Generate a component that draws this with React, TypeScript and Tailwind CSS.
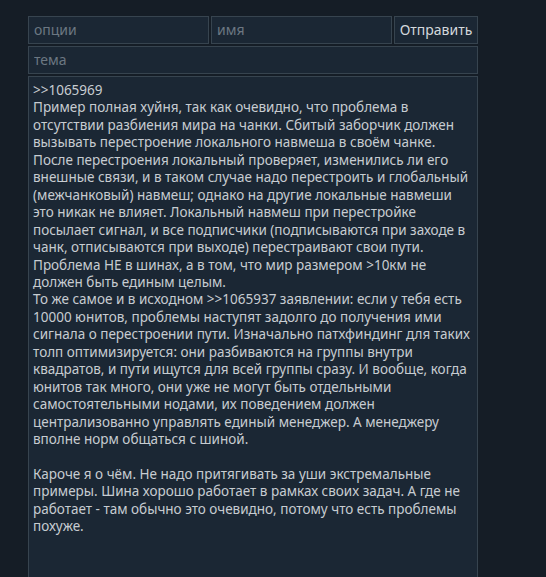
import React from 'react';

const body = `>>1065969
Пример полная хуйня, так как очевидно, что проблема в
отсутствии разбиения мира на чанки. Сбитый заборчик должен
вызывать перестроение локального навмеша в своём чанке.
После перестроения локальный проверяет, изменились ли его
внешные связи, и в таком случае надо перестроить и глобальный
(межчанковый) навмеш; однако на другие локальные навмеши
это никак не влияет. Локальный навмеш при перестройке
посылает сигнал, и все подписчики (подписываются при заходе в
чанк, отписываются при выходе) перестраивают свои пути.
Проблема НЕ в шинах, а в том, что мир размером >10км не
должен быть единым целым.
То же самое и в исходном >>1065937 заявлении: если у тебя есть
10000 юнитов, проблемы наступят задолго до получения ими
сигнала о перестроении пути. Изначально патхфиндинг для таких
толп оптимизируется: они разбиваются на группы внутри
квадратов, и пути ищутся для всей группы сразу. И вообще, когда
юнитов так много, они уже не могут быть отдельными
самостоятельными нодами, их поведением должен
централизованно управлять единый менеджер. А менеджеру
вполне норм общаться с шиной.

Кароче я о чём. Не надо притягивать за уши экстремальные
примеры. Шина хорошо работает в рамках своих задач. А где не
работает - там обычно это очевидно, потому что есть проблемы
похуже.`;

const field =
  'h-[28px] bg-[#1b2734] border border-[#37444f] px-[5px] pb-[1px] text-[14px] text-[#c4c9ce] placeholder:text-[#6c7782] outline-none';

export default function App() {
  return (
    <div className="min-h-[577px] bg-[#151d26] pt-4 pl-[28px] font-['Noto_Sans',sans-serif] overflow-hidden">
      <div className="w-[450px] flex flex-col gap-[2px]">
        <div className="flex gap-[2px]">
          <input className={`${field} w-[181px]`} placeholder="опции" />
          <input className={`${field} w-[181px]`} placeholder="имя" />
          <button className="h-[28px] flex-1 bg-[#1b2734] border border-[#37444f] pb-[1px] text-[14px] text-[#d4d8dc]">
            Отправить
          </button>
        </div>
        <input className={`${field} w-full`} placeholder="тема" />
        <div className="h-[520px] bg-[#1b2734] border border-[#37444f] px-[4px] pt-[5px] text-[13.5px] leading-[17.45px] text-[#c7ccd1] whitespace-pre overflow-hidden">
          {body}
        </div>
      </div>
    </div>
  );
}
